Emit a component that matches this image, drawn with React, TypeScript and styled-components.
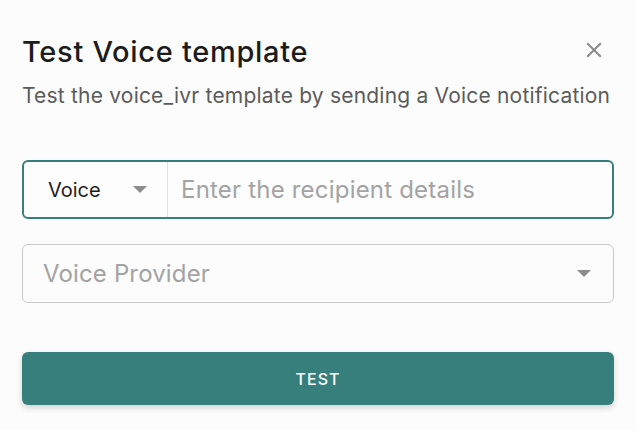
import React from 'react';
import styled, { createGlobalStyle } from 'styled-components';

const GlobalStyle = createGlobalStyle`
  html, body {
    margin: 0;
    padding: 0;
    background: #fcfcfc;
  }
  body {
    font-family: Inter, 'Noto Sans', sans-serif;
  }
`;

const Dialog = styled.div`
  width: 636px;
  height: 430px;
  box-sizing: border-box;
  padding: 34px 22px 0 22px;
  background: #fcfcfc;
  display: flex;
  flex-direction: column;
`;

const Header = styled.div`
  display: flex;
  justify-content: space-between;
  align-items: flex-start;
`;

const Title = styled.h2`
  margin: 0;
  font-size: 29px;
  font-weight: 500;
  letter-spacing: 0.7px;
  color: #1c1c1c;
  line-height: 36px;
`;

const CloseButton = styled.button`
  border: none;
  background: transparent;
  padding: 0;
  margin: 4px 8px 0 0;
  width: 24px;
  height: 24px;
  display: flex;
  align-items: center;
  justify-content: center;
  color: #8a8a8a;
  cursor: pointer;
`;

const Subtitle = styled.p`
  margin: 13px 0 0 0;
  font-size: 21px;
  letter-spacing: 0.2px;
  color: #5b5b5b;
  line-height: 26px;
`;

const InputGroup = styled.div`
  margin-top: 51px;
  height: 59px;
  box-sizing: border-box;
  border: 2px solid #377f7c;
  border-radius: 6px;
  display: flex;
  align-items: stretch;
  background: #fdfdfd;
`;

const ChannelSelect = styled.div`
  width: 144px;
  box-sizing: border-box;
  padding: 0 20px 0 24px;
  display: flex;
  align-items: center;
  justify-content: space-between;
  border-right: 1px solid #e2e2e2;
  font-size: 20px;
  color: #1c1c1c;
`;

const Caret = styled.span<{ $color?: string }>`
  width: 0;
  height: 0;
  border-left: 7px solid transparent;
  border-right: 7px solid transparent;
  border-top: 7px solid ${(p) => p.$color || '#8c8c8c'};
`;

const RecipientInput = styled.input`
  flex: 1;
  border: none;
  outline: none;
  background: transparent;
  padding: 0 13px;
  font-family: Inter, 'Noto Sans', sans-serif;
  font-size: 24px;
  letter-spacing: 0.2px;
  color: #1c1c1c;
  &::placeholder {
    color: #a3a3a3;
  }
`;

const ProviderSelect = styled.div`
  margin-top: 25px;
  height: 59px;
  box-sizing: border-box;
  border: 1px solid #cacaca;
  border-radius: 6px;
  padding: 0 22px 0 20px;
  display: flex;
  align-items: center;
  justify-content: space-between;
  font-size: 24px;
  letter-spacing: 0.15px;
  color: #a3a3a3;
`;

const SubmitButton = styled.button`
  margin-top: 49px;
  height: 53px;
  border: none;
  border-radius: 6px;
  background: #377f7c;
  color: #ffffff;
  font-family: Inter, 'Noto Sans', sans-serif;
  font-size: 16px;
  font-weight: 500;
  letter-spacing: 1px;
  box-shadow: 0 3px 6px rgba(0, 0, 0, 0.16);
  cursor: pointer;
`;

const App: React.FC = () => {
  return (
    <>
      <GlobalStyle />
      <Dialog>
        <Header>
          <Title>Test Voice template</Title>
          <CloseButton aria-label='close'>
            <svg width='16' height='16' viewBox='0 0 16 16'>
              <path d='M1.2 1.2L14.8 14.8M14.8 1.2L1.2 14.8' stroke='currentColor' strokeWidth='2' />
            </svg>
          </CloseButton>
        </Header>
        <Subtitle>Test the voice_ivr template by sending a Voice notification</Subtitle>
        <InputGroup>
          <ChannelSelect>
            Voice
            <Caret />
          </ChannelSelect>
          <RecipientInput placeholder='Enter the recipient details' />
        </InputGroup>
        <ProviderSelect>
          Voice Provider
          <Caret />
        </ProviderSelect>
        <SubmitButton>TEST</SubmitButton>
      </Dialog>
    </>
  );
};

export default App;
